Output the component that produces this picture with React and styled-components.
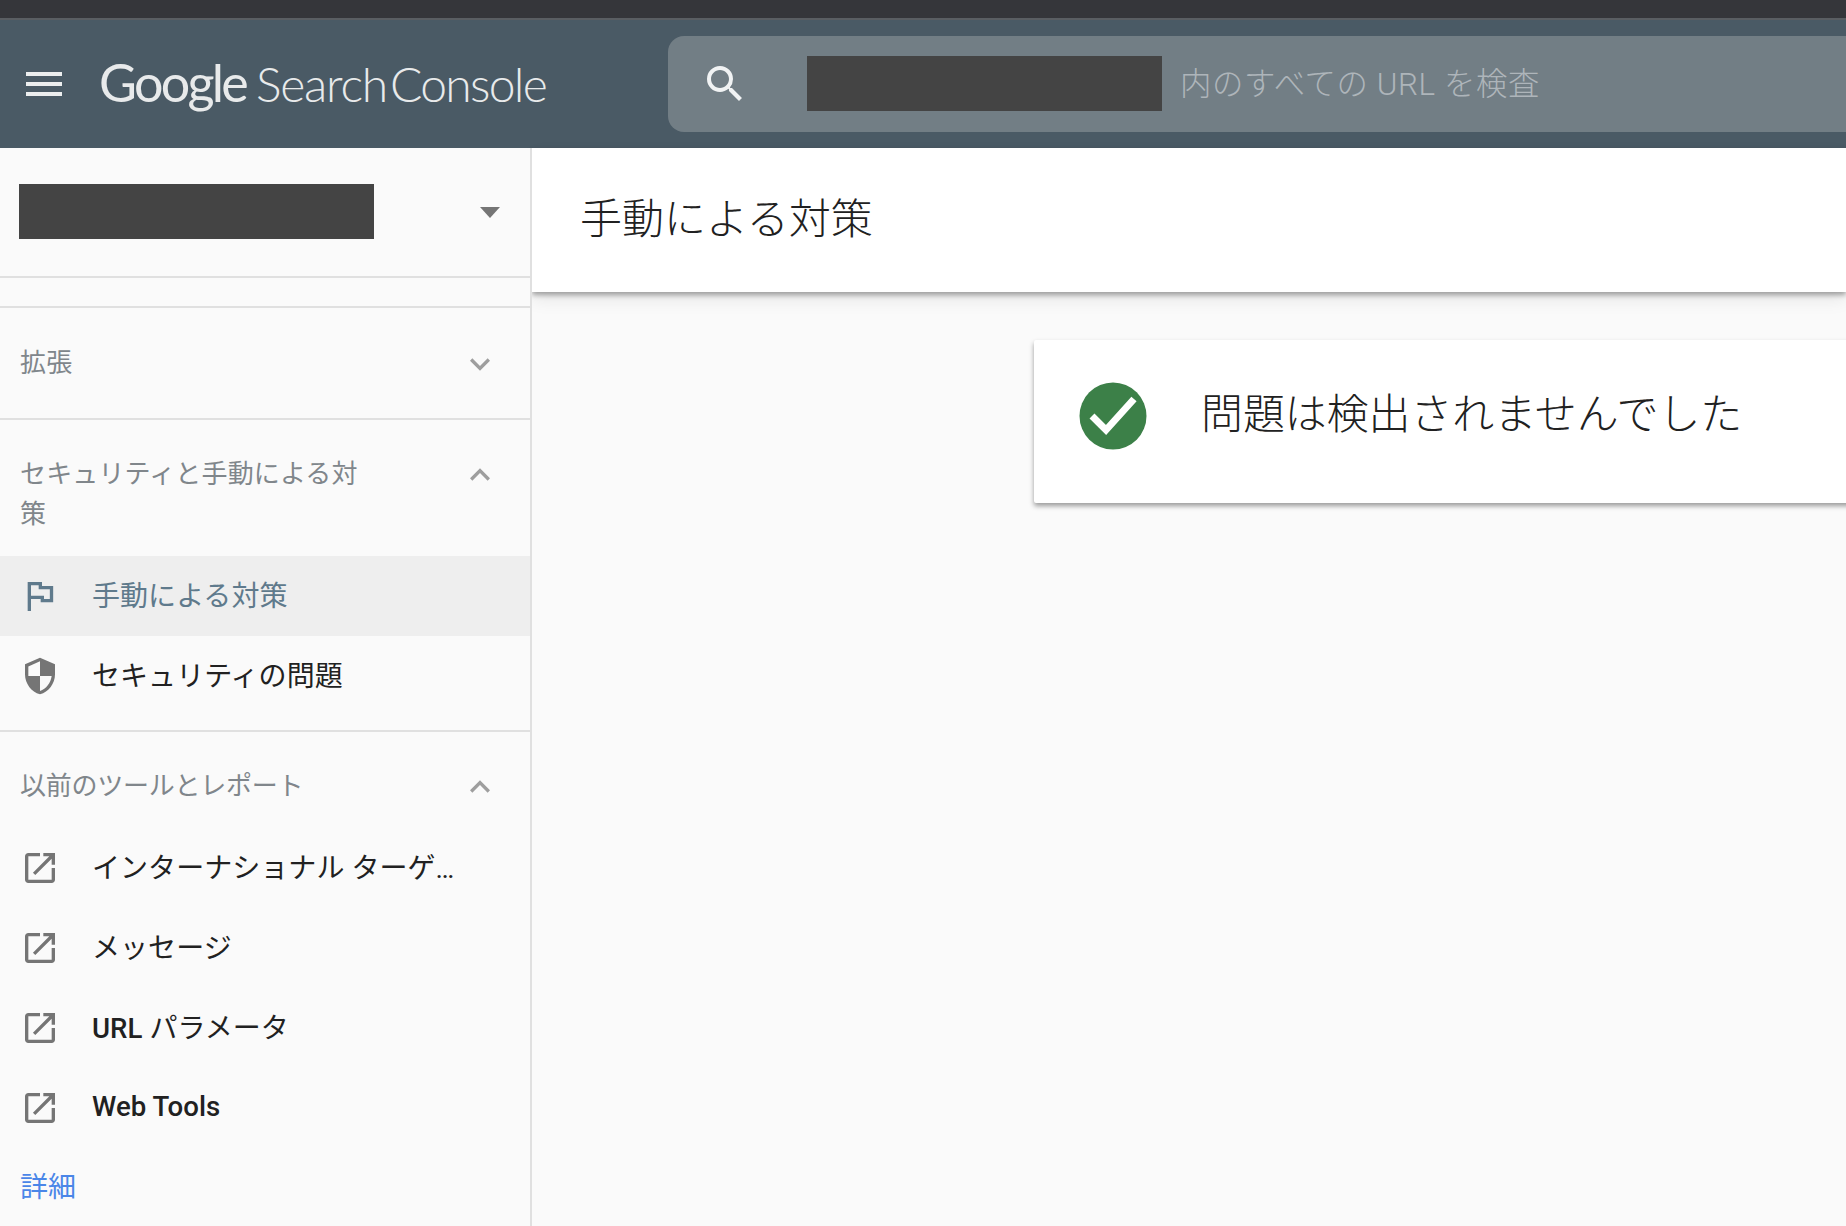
import React from "react";
import styled, { createGlobalStyle } from "styled-components";

const Global = createGlobalStyle`
  html, body { margin: 0; padding: 0; height: 100%; overflow: hidden; background: #fafafa; }
  * { box-sizing: border-box; }
  body { font-family: Roboto, "Noto Sans CJK JP", sans-serif; }
`;

const Page = styled.div`
  width: 1846px;
  height: 1226px;
  display: flex;
  flex-direction: column;
  overflow: hidden;
`;
const BrowserStrip = styled.div`
  height: 20px;
  flex: none;
  background: #35363a;
  border-bottom: 2px solid #5a5e62;
`;
const Header = styled.header`
  height: 128px;
  flex: none;
  display: flex;
  align-items: center;
  background: #4a5a65;
  padding-left: 26px;
`;
const MenuIcon = styled.svg`
  width: 36px;
  height: 24px;
  flex: none;
  margin-right: 37px;
`;
const Logo = styled.div`
  width: 569px;
  flex: none;
  display: flex;
  align-items: baseline;
  color: #e8eaeb;
  white-space: nowrap;
  padding-bottom: 4px;
`;
const LogoGoogle = styled.span`
  font-family: Lato, sans-serif;
  font-size: 52px;
  font-weight: 400;
  letter-spacing: -2.7px;
  margin-right: 10px;
`;
const LogoPart = styled.span`
  font-family: Lato, sans-serif;
  font-size: 48px;
  font-weight: 300;
  letter-spacing: ${(p) => p.$ls}px;
  margin-right: 3px;
`;
const Search = styled.div`
  flex: 1;
  height: 96px;
  margin-right: -20px;
  display: flex;
  align-items: center;
  background: #727e85;
  border-radius: 16px 0 0 16px;
  padding-left: 33px;
`;
const SearchGlyph = styled.svg`
  width: 48px;
  height: 48px;
  flex: none;
  margin-right: 58px;
`;
const Redact = styled.div`
  flex: none;
  width: 355px;
  height: 55px;
  background: #444444;
  margin-bottom: 2px;
`;
const Placeholder = styled.span`
  margin-left: 18px;
  padding-bottom: 5px;
  font-size: 31.4px;
  letter-spacing: 0.6px;
  color: #aeb5ba;
  white-space: nowrap;
  font-weight: 300;
`;
const Body = styled.div`
  flex: 1;
  display: flex;
  min-height: 0;
`;
const Sidebar = styled.aside`
  width: 532px;
  flex: none;
  position: relative;
  z-index: 1;
  background: #fafafa;
  border-right: 2px solid #e0e0e0;
  display: flex;
  flex-direction: column;
`;
const PropertyRow = styled.div`
  height: 130px;
  flex: none;
  display: flex;
  align-items: center;
  justify-content: space-between;
  padding: 0 30px 0 19px;
  border-bottom: 2px solid #e0e0e0;
`;
const Caret = styled.div`
  width: 0;
  height: 0;
  border-left: 10px solid transparent;
  border-right: 10px solid transparent;
  border-top: 11px solid #757575;
`;
const Spacer = styled.div`
  height: 30px;
  flex: none;
  border-bottom: 2px solid #e0e0e0;
`;
const SectionHead = styled.div`
  display: flex;
  justify-content: space-between;
  align-items: ${(p) => (p.$top ? "flex-start" : "center")};
  height: ${(p) => p.$h}px;
  flex: none;
  padding: ${(p) => p.$pt || 0}px 30px 0 20px;
  border-bottom: ${(p) => (p.$rule ? "2px solid #e0e0e0" : "none")};
`;
const SectionTitle = styled.div`
  width: 350px;
  font-size: 26px;
  line-height: 39.5px;
  color: #80868b;
  letter-spacing: ${(p) => p.$ls ?? 0.15}px;
`;
const Chevron = styled.svg`
  width: 40px;
  height: 40px;
  flex: none;
`;
const Item = styled.div`
  height: 80px;
  flex: none;
  display: flex;
  align-items: center;
  padding-left: 20px;
  background: ${(p) => (p.$active ? "#eeeeee" : "transparent")};
  color: ${(p) => (p.$active ? "#5f7a8c" : "#212121")};
`;
const ItemIcon = styled.svg`
  width: 40px;
  height: 40px;
  flex: none;
  margin-right: 32px;
`;
const ItemLabel = styled.span`
  font-size: 28px;
  letter-spacing: 0.05px;
  white-space: nowrap;
  margin-top: -4px;
  color: inherit;
`;
const Latin = styled.span`
  font-weight: 500;
  font-size: 27.6px;
`;
const Divider = styled.div`
  height: 2px;
  flex: none;
  margin-top: 14px;
  background: #e0e0e0;
`;
const MoreLink = styled.a`
  display: block;
  margin: 20px 0 0 20px;
  font-size: 28px;
  line-height: 40px;
  color: #4a86e8;
`;
const Main = styled.main`
  flex: 1;
  min-width: 0;
  background: #fafafa;
  display: flex;
  flex-direction: column;
`;
const TitleBar = styled.div`
  height: 144px;
  flex: none;
  display: flex;
  align-items: center;
  padding-left: 48px;
  padding-bottom: 10px;
  background: #fff;
  box-shadow: 0 3px 5px rgba(0, 0, 0, 0.33), 0 8px 16px rgba(0, 0, 0, 0.08);
  font-size: 42px;
  color: #212121;
  font-weight: 300;
`;
const Card = styled.section`
  margin: 48px -10px 0 502px;
  height: 163px;
  flex: none;
  display: flex;
  align-items: flex-start;
  background: #fff;
  border-radius: 2px;
  box-shadow: 0 3px 5px rgba(0, 0, 0, 0.38);
  padding: 42px 0 0 45px;
`;
const CheckIcon = styled.svg`
  width: 68px;
  height: 68px;
  flex: none;
  margin-right: 54px;
`;
const CardText = styled.div`
  font-size: 41.9px;
  line-height: 60px;
  margin-top: 3px;
  color: #212121;
  font-weight: 300;
  white-space: nowrap;
`;

const OPEN = "M19 19H5V5h7V3H5c-1.11 0-2 .9-2 2v14c0 1.1.89 2 2 2h14c1.1 0 2-.9 2-2v-7h-2v7zM14 3v2h3.59l-9.83 9.83 1.41 1.41L19 6.41V10h2V3h-7z";
const SHIELD = "M12 1L3 5v6c0 5.55 3.84 10.74 9 12 5.16-1.26 9-6.45 9-12V5l-9-4zm0 10.99h7c-.53 4.12-3.28 7.79-7 8.94V12H5V6.3l7-3.11v8.8z";
const FLAG = "M4.6 3.6h8.6V6h6.7v9.8h-7.5v-2H6.6V21h-2zM6.6 5.6v6.2h7.8v2h3.5V8h-6.7V5.6z";

const Glyph = ({ d, color }) => (
  <ItemIcon viewBox="0 0 24 24"><path d={d} fill={color} fillRule="evenodd" /></ItemIcon>
);
const Down = () => (
  <Chevron viewBox="0 0 24 24"><path d="M16.59 8.59L12 13.17 7.41 8.59 6 10l6 6 6-6z" fill="#9e9e9e" /></Chevron>
);
const Up = () => (
  <Chevron viewBox="0 0 24 24"><path d="M12 8l-6 6 1.41 1.41L12 10.83l4.59 4.58L18 14z" fill="#9e9e9e" /></Chevron>
);

export default function App() {
  return (
    <Page>
      <Global />
      <BrowserStrip />
      <Header>
        <MenuIcon viewBox="0 0 36 24">
          <path d="M0 0h36v4H0zM0 10h36v4H0zM0 20h36v4H0z" fill="#eceeef" />
        </MenuIcon>
        <Logo>
          <LogoGoogle>Google</LogoGoogle>
          <LogoPart $ls={-1.25}>Search</LogoPart>
          <LogoPart $ls={-1.7}>Console</LogoPart>
        </Logo>
        <Search>
          <SearchGlyph viewBox="0 0 24 24">
            <path d="M15.5 14h-.79l-.28-.27A6.47 6.47 0 0 0 16 9.5 6.5 6.5 0 1 0 9.5 16c1.61 0 3.09-.59 4.23-1.57l.27.28v.79l5 4.99L20.49 19l-4.99-5zm-6 0C7.01 14 5 11.99 5 9.5S7.01 5 9.5 5 14 7.01 14 9.5 11.99 14 9.5 14z" fill="#f1f3f4" />
          </SearchGlyph>
          <Redact />
          <Placeholder>内のすべての URL を検査</Placeholder>
        </Search>
      </Header>
      <Body>
        <Sidebar>
          <PropertyRow>
            <Redact />
            <Caret />
          </PropertyRow>
          <Spacer />
          <SectionHead $h={112} $pt={2} $rule>
            <SectionTitle>拡張</SectionTitle>
            <Down />
          </SectionHead>
          <SectionHead $h={136} $top $pt={35}>
            <SectionTitle>セキュリティと手動による対策</SectionTitle>
            <Up />
          </SectionHead>
          <Item $active>
            <Glyph d={FLAG} color="#5f7a8c" />
            <ItemLabel>手動による対策</ItemLabel>
          </Item>
          <Item>
            <Glyph d={SHIELD} color="#757575" />
            <ItemLabel>セキュリティの問題</ItemLabel>
          </Item>
          <Divider />
          <SectionHead $h={96} $pt={14}>
            <SectionTitle $ls={-0.25}>以前のツールとレポート</SectionTitle>
            <Up />
          </SectionHead>
          <Item>
            <Glyph d={OPEN} color="#757575" />
            <ItemLabel>インターナショナル ターゲ…</ItemLabel>
          </Item>
          <Item>
            <Glyph d={OPEN} color="#757575" />
            <ItemLabel>メッセージ</ItemLabel>
          </Item>
          <Item>
            <Glyph d={OPEN} color="#757575" />
            <ItemLabel><Latin>URL</Latin> パラメータ</ItemLabel>
          </Item>
          <Item>
            <Glyph d={OPEN} color="#757575" />
            <ItemLabel><Latin>Web Tools</Latin></ItemLabel>
          </Item>
          <MoreLink>詳細</MoreLink>
        </Sidebar>
        <Main>
          <TitleBar>手動による対策</TitleBar>
          <Card>
            <CheckIcon viewBox="0 0 68 68">
              <circle cx="34" cy="34" r="33.5" fill="#3c8048" />
              <path d="M13 34l14 14 28-31" fill="none" stroke="#fff" strokeWidth="7" />
            </CheckIcon>
            <CardText>問題は検出されませんでした</CardText>
          </Card>
        </Main>
      </Body>
    </Page>
  );
}
